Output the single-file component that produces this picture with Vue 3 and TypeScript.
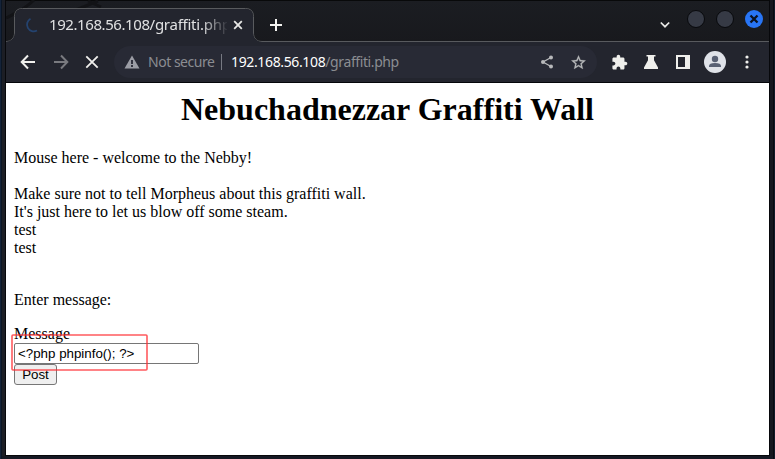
<script setup lang="ts">
import { ref } from 'vue'

const host = '192.168.56.108'
const path = '/graffiti.php'
const message = ref('<?php phpinfo(); ?>')
const posts: string[] = [
  'Make sure not to tell Morpheus about this graffiti wall.',
  "It's just here to let us blow off some steam.",
  'test',
  'test',
]
</script>

<template>
  <div class="desktop">
    <div class="window">
      <header class="tabstrip">
        <svg class="tab-shape" width="763" height="42" viewBox="0 0 763 42">
          <path d="M28 0C18 10 8 14 0 18M20 30L92 1M82 1L95 7" fill="none" stroke="#121316" stroke-width="3" />
          <path d="M0 41.5C5 41.5 8.500 38 8.500 33V16.500Q8.500 8.500 16.500 8.500H239.500Q247.500 8.500 247.500 16.500V33C247.500 38 250.500 41.500 256 41.500H763V42H0Z" fill="none" stroke="#595b5e" />
          <path d="M0 42C5.500 41 9 38 9 33V16.500Q9 9 16.500 9H239.500Q247 9 247 16.500V33C247 38 250.500 42 256 42Z" fill="#23252e" />
        </svg>
        <div class="tab">
          <svg class="spinner" width="16" height="16" viewBox="0 0 16 16"><path d="M6.500 1.700A6.500 6.500 0 1 0 13 13.500" fill="none" stroke="#24436f" stroke-width="1.800" /></svg>
          <span class="tab-title">{{ host }}<span class="tab-path">{{ path }}</span></span>
          <svg class="tab-close" width="10" height="10" viewBox="0 0 10 10"><path d="M1.200 1.200L8.800 8.800M8.800 1.200L1.200 8.800" stroke="#e8e8e6" stroke-width="1.800" /></svg>
        </div>
        <svg class="new-tab" width="14" height="14" viewBox="0 0 14 14"><path d="M7 1V13M1 7H13" stroke="#f3f3f0" stroke-width="2" /></svg>
        <div class="controls">
          <svg class="chevron" width="10" height="8" viewBox="0 0 10 8"><path d="M.8 1.500L5 5.700L9.200 1.500" fill="none" stroke="#e8e8e6" stroke-width="1.700" /></svg>
          <span class="dot" />
          <span class="dot" />
          <span class="dot close">
            <svg width="10" height="10" viewBox="0 0 10 10"><path d="M1.500 1.500L8.500 8.500M8.500 1.500L1.500 8.500" stroke="#0b1220" stroke-width="2.300" /></svg>
          </span>
        </div>
      </header>

      <nav class="toolbar">
        <svg class="back" width="16" height="16" viewBox="0 0 16 16"><path d="M15 8H2M8 1.500L1.700 8L8 14.500" fill="none" stroke="#f0f0ed" stroke-width="2" /></svg>
        <svg class="forward" width="16" height="16" viewBox="0 0 16 16"><path d="M1 8H14M8 1.500L14.300 8L8 14.500" fill="none" stroke="#797a7f" stroke-width="2" /></svg>
        <svg class="stop" width="14" height="14" viewBox="0 0 14 14"><path d="M1.300 1.300L12.700 12.700M12.700 1.300L1.300 12.700" stroke="#f0f0ed" stroke-width="1.800" /></svg>
        <div class="address">
          <svg class="warn" width="16" height="14" viewBox="0 0 16 14"><path d="M8 .5L15.500 13.500H.5Z" fill="#9b9da5" /><path d="M8 5V9M8 10V12" stroke="#272935" stroke-width="1.800" /></svg>
          <span class="secure">Not secure</span>
          <span class="divider" />
          <span class="url"><b>{{ host }}</b>{{ path }}</span>
          <svg class="share" width="14" height="14" viewBox="0 0 14 14"><path d="M11 2.500L3 7L11 11.500" fill="none" stroke="#b8b9bb" stroke-width="1.300" /><g fill="#b8b9bb"><circle cx="11" cy="2.500" r="2" /><circle cx="3" cy="7" r="2" /><circle cx="11" cy="11.500" r="2" /></g></svg>
          <svg class="star" width="17" height="17" viewBox="0 0 24 24"><path fill="#b8b9bb" stroke="#b8b9bb" stroke-width=".4" d="M22 9.240l-7.190-.62L12 2 9.190 8.630 2 9.240l5.460 4.730L5.820 21 12 17.270 18.180 21l-1.630-7.030L22 9.240zM12 15.400l-3.760 2.270 1-4.280-3.320-2.880 4.380-.38L12 6.100l1.710 4.040 4.380.38-3.320 2.880 1 4.280L12 15.400z" /></svg>
        </div>
        <svg class="puzzle" width="17" height="17" viewBox="0 0 24 24"><path fill="#efefec" d="M20.500 11H19V7c0-1.100-.9-2-2-2h-4V3.500C13 2.120 11.880 1 10.500 1S8 2.120 8 3.500V5H4c-1.100 0-1.990.9-1.990 2v3.800H3.500c1.490 0 2.700 1.210 2.700 2.700s-1.210 2.700-2.700 2.700H2V20c0 1.100.9 2 2 2h3.800v-1.500c0-1.490 1.210-2.700 2.700-2.700s2.700 1.210 2.700 2.700V22H17c1.100 0 2-.9 2-2v-4h1.500c1.380 0 2.500-1.120 2.500-2.500S21.880 11 20.500 11z" /></svg>
        <svg class="flask" width="16" height="16" viewBox="0 0 16 16"><path fill="#efefec" d="M3.500 1H12.500V2.500H11V6.200L15 13.500V15H1V13.500L5 6.200V2.500H3.500Z" /></svg>
        <svg class="panel" width="14" height="14" viewBox="0 0 14 14"><path fill="#efefec" fill-rule="evenodd" d="M0 0H14V14H0ZM2 2V12H9V2Z" /></svg>
        <svg class="avatar" width="22" height="22" viewBox="0 0 22 22"><circle cx="11" cy="11" r="11" fill="#dfe2e8" /><circle cx="11" cy="8" r="3.200" fill="#586073" /><path d="M5 16V15Q5 12 11 12T17 15V16Z" fill="#586073" /></svg>
        <svg class="more" width="4" height="14" viewBox="0 0 4 14"><g fill="#efefec"><circle cx="2" cy="2" r="1.600" /><circle cx="2" cy="7" r="1.600" /><circle cx="2" cy="12" r="1.600" /></g></svg>
      </nav>

      <main class="page">
        <h1>Nebuchadnezzar Graffiti Wall</h1>
        <p class="welcome">Mouse here - welcome to the Nebby!</p>
        <div class="posts">
          <div v-for="(post, i) in posts" :key="i">{{ post }}</div>
        </div>
        <form @submit.prevent>
          <p class="prompt">Enter message:</p>
          <label for="message">Message</label>
          <input id="message" v-model="message" type="text">
          <button type="submit">Post</button>
          <svg class="highlight" width="138" height="39" viewBox="0 0 138 39"><rect x="1" y="1" width="135" height="35" rx="1" fill="none" stroke="#ff2d32" stroke-opacity=".78" stroke-width="1.600" /></svg>
        </form>
      </main>
    </div>
  </div>
</template>

<style>
body { margin: 0; overflow: hidden; }
</style>

<style scoped>
* { box-sizing: border-box; }
svg { display: block; flex: none; }
.desktop {
  width: 775px; height: 459px; padding: 0 6px 4px;
  background: linear-gradient(90deg, #14233a 0, #14233a 1px, #0b1624 1px, #0b1624 2px, #1c1e25 2px, #1c1e25 5px, #07080b 5px, #07080b 769px, #07080b 770px, #15181f 770px, #15181f 773px, #080b10 773px, #080b10 774px, #111b29 774px);
  position: relative;
}
.desktop::after { content: ""; position: absolute; left: 2px; right: 2px; bottom: 0; height: 3px; background: #151923; }
.window { width: 763px; height: 455px; display: flex; flex-direction: column; }
.tabstrip {
  height: 42px; flex: none; position: relative; display: flex;
  background: linear-gradient(#1b1d22, #18191d); border-top: 1px solid #08090a;
}
.tab-shape { position: absolute; left: 0; top: -1px; }
.tab {
  position: relative; width: 247px; height: 41px; padding: 8px 10px 0 18px;
  display: flex; align-items: center; font: 15px/20px "Noto Sans", sans-serif; color: #e0e1e2;
}
.spinner { position: relative; top: -1px; }
.tab-title {
  width: 178px; margin-left: 9px; margin-top: -3px; overflow: hidden; white-space: nowrap; letter-spacing: -.42px;
  -webkit-mask-image: linear-gradient(90deg, #000 152px, transparent 180px);
  mask-image: linear-gradient(90deg, #000 152px, transparent 180px);
}
.tab-path { letter-spacing: -.25px; }
.tab-close { margin-left: 6px; margin-top: -1px; }
.new-tab { position: relative; margin: 17px 0 0 16px; }
.controls { position: relative; margin-left: auto; height: 36px; padding-right: 6px; display: flex; align-items: center; }
.chevron { margin: 12px 17px 0 0; }
.dot { width: 18px; height: 18px; border-radius: 50%; background: #363a45; border: 1px solid #08090c; margin-right: 11px; }
.dot.close { width: 18px; margin: 0; border: 0; background: #2875f5; display: flex; align-items: center; justify-content: center; }
.toolbar {
  height: 41px; flex: none; display: flex; align-items: center; padding-left: 14px;
  background: #23252e; border-bottom: 1px solid #05060a;
}
.forward { margin-left: 17px; }
.stop { margin-left: 16px; }
.address {
  width: 483px; height: 32px; margin-left: 15px; padding-left: 10px; border-radius: 16px;
  display: flex; align-items: center; background: #282a35; font: 14px/20px "Noto Sans", sans-serif; color: #8b8d92;
}
.secure { width: 68px; margin-left: 8px; white-space: nowrap; letter-spacing: -.48px; }
.divider { width: 1px; height: 16px; margin-left: 5px; background: #777982; }
.url { margin-left: 9px; white-space: nowrap; letter-spacing: -.4px; }
.url b { font-weight: 400; color: #fff; letter-spacing: -.36px; }
.share { margin-left: auto; }
.star { margin: 0 10px 0 16px; }
.puzzle { margin-left: 14px; }
.flask { margin-left: 15px; }
.panel { margin-left: 17px; }
.avatar { margin-left: 14px; }
.more { margin-left: 19px; }
.page { flex: 1; padding: 8px; background: #fff; color: #000; font: 16px/18px "Liberation Serif", serif; }
h1 { margin: 0; font-size: 32px; line-height: 37px; text-align: center; }
.welcome { margin: 21px 0 18px; }
form { position: relative; margin-top: 34px; display: flex; flex-direction: column; align-items: flex-start; }
.prompt { margin: 0 0 16px; }
input {
  width: 185px; height: 21px; padding: 1px 3px; margin: 0; border: 1px solid #767676; border-radius: 2px;
  background: #fff; color: #000; font: 13.333px "Liberation Sans", sans-serif;
}
button {
  width: 43px; height: 21px; padding: 0; border: 1px solid #767676; border-radius: 3px;
  background: #efefef; color: #000; font: 13.333px "Liberation Sans", sans-serif;
}
.highlight { position: absolute; left: -3px; top: 43px; }
</style>
